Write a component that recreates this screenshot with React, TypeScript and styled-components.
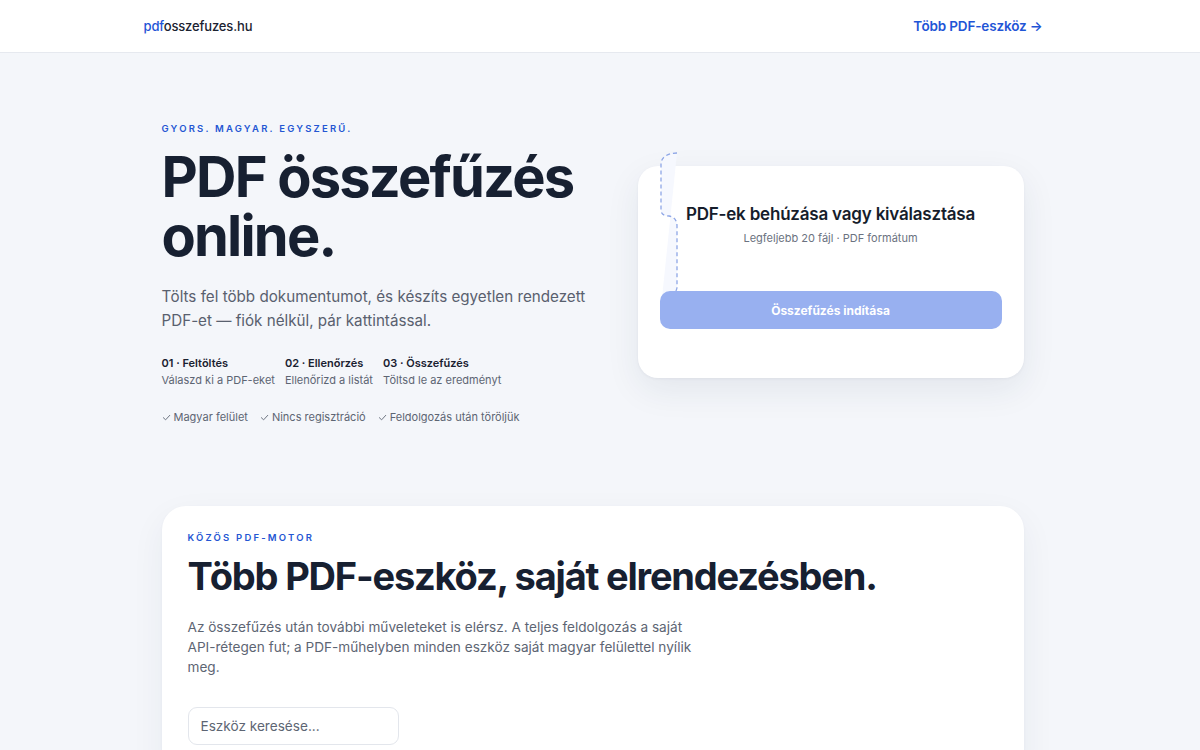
import React from "react";
import styled, { createGlobalStyle } from "styled-components";

const Global = createGlobalStyle`
  html, body { margin: 0; padding: 0; }
  body {
    background: #f4f6fa;
    font-family: Inter, "Noto Sans", "Liberation Sans", sans-serif;
    color: #161d2b;
    -webkit-font-smoothing: antialiased;
  }
  * { box-sizing: border-box; }
`;

const Page = styled.div`
  min-height: 750px;
  overflow: hidden;
`;

const Header = styled.header`
  background: #ffffff;
  border-bottom: 1px solid #e6e9ef;
  height: 53px;
  padding-right: 15px;
`;

const HeaderInner = styled.div`
  width: 900px;
  height: 100%;
  margin: 0 auto;
  display: flex;
  align-items: center;
  justify-content: space-between;
  padding: 0 0 0 1px;
`;

const Logo = styled.div`
  font-size: 13px;
  font-weight: 500;
  color: #1b2231;
  letter-spacing: -0.15px;
`;

const LogoAccent = styled.span`
  color: #1f55d6;
`;

const NavLink = styled.a`
  font-size: 13.5px;
  font-weight: 600;
  color: #1f55d6;
  text-decoration: none;
  letter-spacing: -0.15px;
`;

const Main = styled.main`
  padding-right: 15px;
`;

const Container = styled.div`
  width: 862px;
  margin: 0 auto;
`;

const Hero = styled.section`
  display: grid;
  grid-template-columns: 1fr 386px;
  column-gap: 48px;
  padding-top: 70px;
  padding-bottom: 82px;
`;

const HeroLeft = styled.div`
  display: flex;
  flex-direction: column;
`;

const Eyebrow = styled.div`
  font-size: 9.5px;
  font-weight: 600;
  letter-spacing: 2.2px;
  color: #2456d3;
  text-transform: uppercase;
`;

const HeroTitle = styled.h1`
  margin: 14px 0 0 0;
  font-size: 56px;
  line-height: 59px;
  font-weight: 700;
  letter-spacing: -1.8px;
  color: #172031;
`;

const Lead = styled.p`
  margin: 19px 0 0 0;
  font-size: 15.2px;
  line-height: 24px;
  color: #59606e;
  max-width: 430px;
`;

const Steps = styled.div`
  display: flex;
  gap: 10px;
  margin-top: 23px;
`;

const Step = styled.div`
  display: flex;
  flex-direction: column;
  gap: 3px;
`;

const StepTitle = styled.div`
  font-size: 11px;
  font-weight: 600;
  color: #1a2130;
`;

const StepText = styled.div`
  font-size: 11px;
  color: #5d6573;
`;

const Checks = styled.div`
  display: flex;
  gap: 12px;
  margin-top: 23px;
`;

const Check = styled.div`
  font-size: 11px;
  color: #5d6573;
  display: flex;
  align-items: center;
  gap: 3px;
`;

const UploadCard = styled.div`
  position: relative;
  margin-top: 43px;
  height: 212px;
  background: #ffffff;
  border-radius: 20px;
  box-shadow: 0 12px 34px rgba(30, 45, 80, 0.08), 0 1px 3px rgba(30, 45, 80, 0.05);
  padding: 38px 22px 0 22px;
  display: flex;
  flex-direction: column;
  align-items: center;
`;

const DashedZone = styled.svg`
  position: absolute;
  left: 22px;
  top: -14px;
  overflow: visible;
`;

const UploadTitle = styled.div`
  font-size: 17px;
  font-weight: 600;
  color: #161d2b;
  letter-spacing: -0.2px;
  position: relative;
`;

const UploadHint = styled.div`
  margin-top: 7px;
  font-size: 11px;
  color: #6b7280;
  position: relative;
`;

const MergeButton = styled.button`
  margin-top: 46px;
  width: 100%;
  height: 38px;
  border: none;
  border-radius: 10px;
  background: #98b0f0;
  color: #ffffff;
  font-family: inherit;
  font-size: 12px;
  font-weight: 700;
  position: relative;
`;

const ToolsCard = styled.section`
  background: #ffffff;
  border-radius: 24px;
  box-shadow: 0 12px 34px rgba(30, 45, 80, 0.06), 0 1px 3px rgba(30, 45, 80, 0.04);
  padding: 26px 26px 40px 26px;
  min-height: 260px;
`;

const SectionTitle = styled.h2`
  margin: 10px 0 0 0;
  font-size: 38px;
  line-height: 46px;
  font-weight: 700;
  letter-spacing: -1.2px;
  color: #172031;
`;

const SectionText = styled.p`
  margin: 18px 0 0 0;
  font-size: 13.6px;
  line-height: 20px;
  color: #5d6573;
  max-width: 520px;
`;

const Search = styled.input`
  margin-top: 30px;
  width: 211px;
  height: 38px;
  border: 1px solid #e3e6ec;
  border-radius: 9px;
  padding: 0 12px;
  font-family: inherit;
  font-size: 13.6px;
  color: #1a2130;
  background: #fff;
  outline: none;
  &::placeholder { color: #5d6573; }
`;

const steps = [
  { t: "01 · Feltöltés", d: "Válaszd ki a PDF-eket" },
  { t: "02 · Ellenőrzés", d: "Ellenőrizd a listát" },
  { t: "03 · Összefűzés", d: "Töltsd le az eredményt" },
];

const checks = ["Magyar felület", "Nincs regisztráció", "Feldolgozás után töröljük"];

const CheckIcon = () => (
  <svg width="9" height="9" viewBox="0 0 10 10" fill="none">
    <path d="M1.5 5.2 L4 7.6 L8.6 2.6" stroke="#6b7280" strokeWidth="1.1" strokeLinecap="round" strokeLinejoin="round" />
  </svg>
);

export default function App() {
  return (
    <Page>
      <Global />
      <Header>
        <HeaderInner>
          <Logo>
            <LogoAccent>pdf</LogoAccent>osszefuzes.hu
          </Logo>
          <NavLink href="#">Több PDF-eszköz →</NavLink>
        </HeaderInner>
      </Header>
      <Main>
        <Container>
          <Hero>
            <HeroLeft>
              <Eyebrow>Gyors. Magyar. Egyszerű.</Eyebrow>
              <HeroTitle>
                PDF összefűzés
                <br />
                online.
              </HeroTitle>
              <Lead>
                Tölts fel több dokumentumot, és készíts egyetlen rendezett PDF-et — fiók nélkül, pár kattintással.
              </Lead>
              <Steps>
                {steps.map((s) => (
                  <Step key={s.t}>
                    <StepTitle>{s.t}</StepTitle>
                    <StepText>{s.d}</StepText>
                  </Step>
                ))}
              </Steps>
              <Checks>
                {checks.map((c) => (
                  <Check key={c}>
                    <CheckIcon />
                    {c}
                  </Check>
                ))}
              </Checks>
            </HeroLeft>
            <UploadCard>
              <DashedZone width="20" height="150" viewBox="0 0 20 150">
                <path
                  d="M17 1 C 8 1, 1 5, 1 12 L 1 58 C 1 62, 4 64, 9 64 C 14 65, 17 68, 17 74 L 17 135 C 17 141, 10 146, 2 146"
                  fill="#f6f8fe"
                  stroke="#8ea6e6"
                  strokeWidth="1.3"
                  strokeDasharray="4 3"
                />
              </DashedZone>
              <UploadTitle>PDF-ek behúzása vagy kiválasztása</UploadTitle>
              <UploadHint>Legfeljebb 20 fájl · PDF formátum</UploadHint>
              <MergeButton>Összefűzés indítása</MergeButton>
            </UploadCard>
          </Hero>
          <ToolsCard>
            <Eyebrow>Közös PDF-motor</Eyebrow>
            <SectionTitle>Több PDF-eszköz, saját elrendezésben.</SectionTitle>
            <SectionText>
              Az összefűzés után további műveleteket is elérsz. A teljes feldolgozás a saját API-rétegen fut; a
              PDF-műhelyben minden eszköz saját magyar felülettel nyílik meg.
            </SectionText>
            <Search placeholder="Eszköz keresése..." />
          </ToolsCard>
        </Container>
      </Main>
    </Page>
  );
}
